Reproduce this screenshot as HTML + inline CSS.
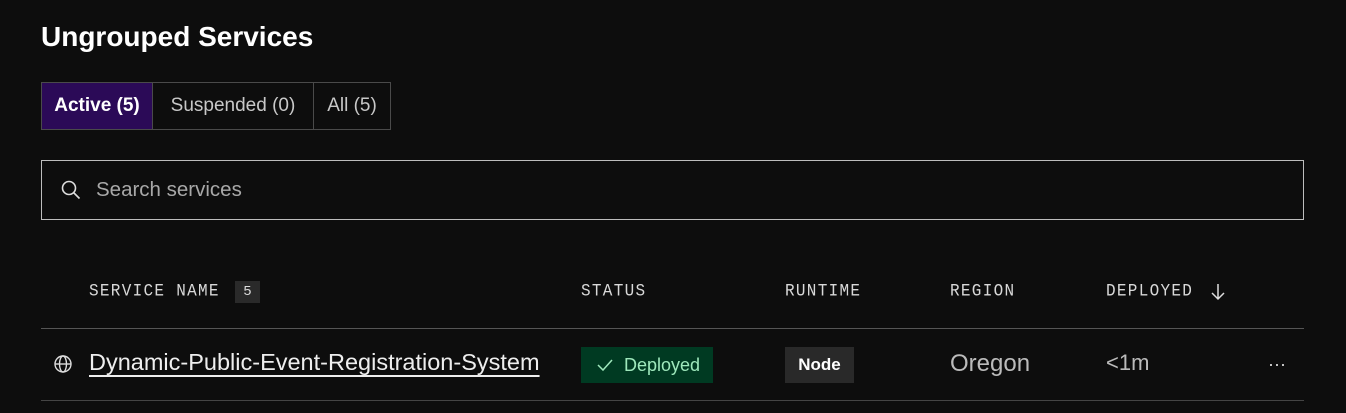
<!DOCTYPE html>
<html><head><style>
body{margin:0;width:1346px;height:413px;background:#0d0d0d;font-family:"Liberation Sans",sans-serif;color:#fff;position:relative;overflow:hidden}
.a{position:absolute}
.tab{position:absolute;top:82px;height:46px;border:1px solid #4a4a4a;line-height:46px;text-align:center;font-size:19px;color:#c8c8c8;box-sizing:content-box}
.h{position:absolute;top:282px;font-family:"Liberation Mono",monospace;font-size:16px;color:#d8d8d8;letter-spacing:1.3px;transform:scaleY(1.12)}
</style></head><body>
<div class="a" style="left:41px;top:21px;font-size:28px;font-weight:bold;letter-spacing:0px">Ungrouped Services</div>
<div class="tab" style="left:41px;width:110px;background:#2b0a57;color:#fff;border-color:#4a4a4a;font-weight:bold">Active (5)</div>
<div class="tab" style="left:152px;width:160px">Suspended (0)</div>
<div class="tab" style="left:313px;width:76px">All (5)</div>
<div class="a" style="left:41px;top:160px;width:1261px;height:58px;border:1px solid #bdbdbd"></div>
<svg class="a" style="left:60px;top:179px" width="22" height="22" viewBox="0 0 22 22" fill="none" stroke="#ddd" stroke-width="1.6"><circle cx="9" cy="9" r="6.5"/><path d="M14 14l5.5 5.5"/></svg>
<div class="a" style="left:96px;top:178px;font-size:20.5px;color:#a8a8a8">Search services</div>
<div class="h" style="left:89px">SERVICE NAME</div>
<div class="a" style="left:235px;top:281px;width:25px;height:22px;background:#2a2a2a;font-family:'Liberation Mono',monospace;font-size:14px;line-height:22px;text-align:center;color:#ddd">5</div>
<div class="h" style="left:581px">STATUS</div>
<div class="h" style="left:785px">RUNTIME</div>
<div class="h" style="left:950px">REGION</div>
<div class="h" style="left:1106px">DEPLOYED</div>
<svg class="a" style="left:1210px;top:282px" width="16" height="20" viewBox="0 0 16 20" fill="none" stroke="#ddd" stroke-width="1.5"><path d="M8 2v15M2 11l6 6 6-6"/></svg>
<div class="a" style="left:41px;top:328px;width:1263px;height:1px;background:#555"></div>
<div class="a" style="left:41px;top:400px;width:1263px;height:1px;background:#444"></div>
<svg class="a" style="left:52px;top:353px" width="22" height="22" viewBox="0 0 22 22" fill="none" stroke="#ddd" stroke-width="1.4"><circle cx="11" cy="11" r="8"/><ellipse cx="11" cy="11" rx="3.5" ry="8"/><path d="M3 11h16"/></svg>
<div class="a" style="left:89px;top:349px;font-size:23.5px;color:#eee;text-decoration:underline;text-underline-offset:5px;letter-spacing:0px">Dynamic-Public-Event-Registration-System</div>
<div class="a" style="left:581px;top:347px;width:132px;height:36px;background:#003a22;color:#9ee8bc;font-size:18px;line-height:36px">
<svg style="position:absolute;left:15px;top:11px" width="18" height="14" viewBox="0 0 18 14" fill="none" stroke="#9ee8bc" stroke-width="1.5"><path d="M2 7l5 5L16 2"/></svg>
<span style="position:absolute;left:43px">Deployed</span></div>
<div class="a" style="left:785px;top:347px;width:69px;height:36px;background:#292929;color:#fff;font-size:17px;line-height:36px;text-align:center;font-weight:bold">Node</div>
<div class="a" style="left:950px;top:350px;font-size:24px;color:#bbb">Oregon</div>
<div class="a" style="left:1106px;top:350px;font-size:22px;color:#bbb">&lt;1m</div>
<div class="a" style="left:1268px;top:354px;font-size:18px;color:#ddd">···</div>
</body></html>
